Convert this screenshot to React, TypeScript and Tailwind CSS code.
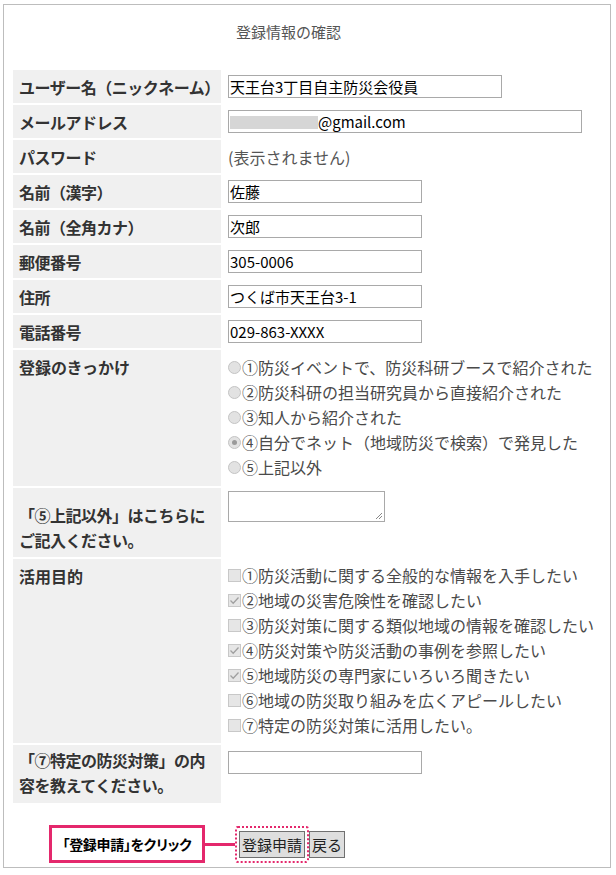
import React from "react";

const FONT = '"Noto Sans CJK JP", "Noto Sans", sans-serif';

const simpleRows: { label: string; value: React.ReactNode }[] = [
  { label: "ユーザー名（ニックネーム）", value: <TextBox width={274} text="天王台3丁目自主防災会役員" /> },
  {
    label: "メールアドレス",
    value: (
      <TextBox
        width={354}
        text={
          <>
            <span className="inline-block w-[88px] h-[13px] bg-[#d6d6d6] align-[-1px]" />
            @gmail.com
          </>
        }
      />
    ),
  },
  { label: "パスワード", value: <span className="text-[16px] text-[#555]">(表示されません)</span> },
  { label: "名前（漢字）", value: <TextBox width={194} text="佐藤" /> },
  { label: "名前（全角カナ）", value: <TextBox width={194} text="次郎" /> },
  { label: "郵便番号", value: <TextBox width={194} text="305-0006" /> },
  { label: "住所", value: <TextBox width={194} text="つくば市天王台3-1" /> },
  { label: "電話番号", value: <TextBox width={194} text="029-863-XXXX" /> },
];

const triggers = [
  "①防災イベントで、防災科研ブースで紹介された",
  "②防災科研の担当研究員から直接紹介された",
  "③知人から紹介された",
  "④自分でネット（地域防災で検索）で発見した",
  "⑤上記以外",
];

const purposes = [
  { text: "①防災活動に関する全般的な情報を入手したい", on: false },
  { text: "②地域の災害危険性を確認したい", on: true },
  { text: "③防災対策に関する類似地域の情報を確認したい", on: false },
  { text: "④防災対策や防災活動の事例を参照したい", on: true },
  { text: "⑤地域防災の専門家にいろいろ聞きたい", on: true },
  { text: "⑥地域の防災取り組みを広くアピールしたい", on: false },
  { text: "⑦特定の防災対策に活用したい。", on: false },
];

function TextBox({ width, text }: { width: number; text?: React.ReactNode }) {
  return (
    <div
      className="h-[23px] border border-[#a9a9a9] bg-white pl-[1px] text-[15px] leading-[21px] text-black whitespace-nowrap overflow-hidden"
      style={{ width }}
    >
      {text}
    </div>
  );
}

function Radio({ on }: { on: boolean }) {
  return (
    <span className="inline-flex w-[13px] h-[13px] mr-[1px] rounded-full border border-[#c4c4c4] bg-[#e2e2e2] items-center justify-center shrink-0">
      {on && <span className="w-[5px] h-[5px] rounded-full bg-[#9a9a9a]" />}
    </span>
  );
}

function Check({ on }: { on: boolean }) {
  return (
    <span className="inline-flex w-[13px] h-[13px] mr-[1px] border border-[#c8c8c8] bg-[#e6e6e6] items-center justify-center shrink-0">
      {on && (
        <svg width="11" height="11" viewBox="0 0 11 11">
          <path d="M1.5 5.5 L4.2 8.2 L9.5 2.5" fill="none" stroke="#a0a0a0" strokeWidth="1.3" />
        </svg>
      )}
    </span>
  );
}

function Label({ children, className = "" }: { children: React.ReactNode; className?: string }) {
  return (
    <div className={`w-[208px] shrink-0 bg-[#f0f0f0] pl-[6px] text-[16px] font-bold text-[#333] ${className}`}>
      {children}
    </div>
  );
}

export default function App() {
  return (
    <div className="bg-white w-[616px] h-[875px] pt-[4px] pl-[3px]" style={{ fontFamily: FONT }}>
      <div className="w-[608px] h-[864px] border border-[#bdbdbd] pl-[9px]">
        <div className="pt-[15px] pl-[223px] text-[15px] leading-[24px] text-[#555]">登録情報の確認</div>

        <div className="mt-[26px] flex flex-col gap-[2px]">
          {simpleRows.map((r) => (
            <div key={r.label} className="flex h-[33px]">
              <Label className="flex items-center whitespace-nowrap tracking-[-0.5px]">{r.label}</Label>
              <div className="pl-[7px] flex items-center">{r.value}</div>
            </div>
          ))}

          <div className="flex h-[136px]">
            <Label className="pt-[5px] leading-[24px]">登録のきっかけ</Label>
            <div className="pl-[7px] pt-[5px] text-[16px] leading-[25px] text-[#4a4a4a]">
              {triggers.map((t, i) => (
                <div key={t} className="flex items-center whitespace-nowrap">
                  <Radio on={i === 3} />
                  {t}
                </div>
              ))}
            </div>
          </div>

          <div className="flex h-[69px]">
            <Label className="pt-[15px] leading-[25px] tracking-[-0.5px]">
              「⑤上記以外」はこちらに
              <br />
              ご記入ください。
            </Label>
            <div className="pl-[7px] pt-[3px]">
              <div className="relative w-[157px] h-[31px] border border-[#a9a9a9] bg-white">
                <svg className="absolute right-[1px] bottom-[1px]" width="8" height="8" viewBox="0 0 8 8">
                  <path d="M7 1 L1 7 M7 4 L4 7" stroke="#888" strokeWidth="1" />
                </svg>
              </div>
            </div>
          </div>

          <div className="flex h-[184px]">
            <Label className="pt-[5px] leading-[24px]">活用目的</Label>
            <div className="pl-[7px] pt-[4px] text-[16px] leading-[25px] text-[#4a4a4a]">
              {purposes.map((p) => (
                <div key={p.text} className="flex items-center whitespace-nowrap">
                  <Check on={p.on} />
                  {p.text}
                </div>
              ))}
            </div>
          </div>

          <div className="flex h-[58px]">
            <Label className="pt-[3px] leading-[25px] tracking-[-0.5px]">
              「⑦特定の防災対策」の内
              <br />
              容を教えてください。
            </Label>
            <div className="pl-[7px] pt-[6px]">
              <TextBox width={194} />
            </div>
          </div>
        </div>

        <div className="mt-[22px] flex items-center pl-[36px]">
          <div className="w-[156px] h-[38px] border-[3px] border-[#e4286c] flex items-center justify-center text-[14px] font-bold text-black [font-feature-settings:'palt'] tracking-[-0.3px]">
            「登録申請」をクリック
          </div>
          <div className="w-[30px] h-[3px] bg-[#e4286c]" />
          <div className="border-[2px] border-dotted border-[#e4286c] rounded-[3px] px-[2px] py-[3px]">
            <div className="h-[27px] px-[2px] border border-[#707070] bg-[#dedede] text-[15px] leading-[25px] text-[#222]">
              登録申請
            </div>
          </div>
          <div className="h-[27px] px-[2px] border border-[#707070] bg-[#dedede] text-[15px] leading-[25px] text-[#222]">
            戻る
          </div>
        </div>
      </div>
    </div>
  );
}
